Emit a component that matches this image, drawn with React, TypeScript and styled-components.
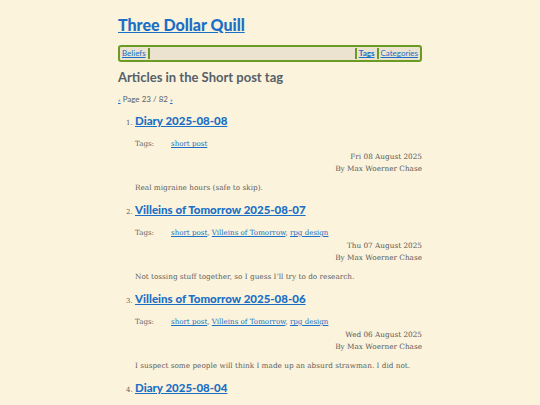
import * as React from 'react'
import styled, { createGlobalStyle } from 'styled-components'

const GlobalStyle = createGlobalStyle`
  body {
    margin: 0;
    background: #fbf3dc;
    color: #5a5a5a;
    font-family: "DejaVu Serif", serif;
  }
`

const linkColor = '#1a6fc6'
const green = '#6b9b22'
const headFont = 'Lato, "Open Sans", sans-serif'

const Page = styled.div`
  width: 304px;
  margin: 0 auto;
  padding-top: 13px;
`

const SiteTitle = styled.h1`
  margin: 0;
  font-family: ${headFont};
  font-size: 16px;
  line-height: 24px;
  font-weight: 900;

  a {
    color: ${linkColor};
  }
`

const Nav = styled.nav`
  margin-top: 8px;
  display: flex;
  align-items: stretch;
  border: 2px solid ${green};
  border-radius: 3px;
  background: #ebe3cf;
  height: 13px;
  font-family: ${headFont};
  font-size: 8px;
  line-height: 13px;
`

const NavItem = styled.a<{ $current?: boolean; $first?: boolean }>`
  padding: 0 2px;
  color: ${linkColor};
  font-weight: ${(p) => (p.$current ? 700 : 400)};
  border-left: ${(p) => (p.$first ? 'none' : `2px solid ${green}`)};
  margin: 1px 0;
  line-height: 11px;
`

const NavSpacer = styled.div`
  flex: 1;
  border-left: 2px solid ${green};
  margin: 1px 0;
`

const PageHeading = styled.h2`
  margin: 6px 0 0;
  font-family: ${headFont};
  font-size: 13px;
  line-height: 18px;
  font-weight: 700;
  color: #56606a;
`

const Pager = styled.p`
  margin: 8px 0 0;
  font-family: ${headFont};
  font-size: 8px;
  line-height: 10px;
  color: #5a6068;

  a {
    color: ${linkColor};
    font-size: 6px;
  }
`

const ArticleList = styled.ol`
  margin: 7px 0 0;
  padding-left: 17px;
`

const Article = styled.li`
  font-size: 7px;
  color: #666;
  padding-bottom: 7px;
`

const ArticleTitle = styled.h3`
  margin: 0;
  font-family: ${headFont};
  font-size: 11.5px;
  line-height: 18px;
  font-weight: 900;

  a {
    color: ${linkColor};
  }
`

const TagRow = styled.div`
  margin-top: 8px;
  display: flex;
  font-size: 7.1px;
  line-height: 12px;
  color: #666;
`

const TagLabel = styled.span`
  width: 36px;
`

const TagLink = styled.a`
  color: ${linkColor};
`

const Meta = styled.div`
  text-align: right;
  font-size: 7.3px;
  line-height: 12px;
  margin-top: 1px;
  color: #595959;
`

const Summary = styled.p`
  margin: 7px 0 0;
  font-size: 7.3px;
  line-height: 12px;
  color: #5f5f5f;
`

type Post = {
  title: string
  tags: string[]
  date: string
  summary: string
}

const posts: Post[] = [
  {
    title: 'Diary 2025-08-08',
    tags: ['short post'],
    date: 'Fri 08 August 2025',
    summary: 'Real migraine hours (safe to skip).',
  },
  {
    title: 'Villeins of Tomorrow 2025-08-07',
    tags: ['short post', 'Villeins of Tomorrow', 'rpg design'],
    date: 'Thu 07 August 2025',
    summary: 'Not tossing stuff together, so I guess I\u2019ll try to do research.',
  },
  {
    title: 'Villeins of Tomorrow 2025-08-06',
    tags: ['short post', 'Villeins of Tomorrow', 'rpg design'],
    date: 'Wed 06 August 2025',
    summary: 'I suspect some people will think I made up an absurd strawman. I did not.',
  },
  {
    title: 'Diary 2025-08-04',
    tags: ['short post'],
    date: 'Mon 04 August 2025',
    summary: '',
  },
]

export default function App() {
  return (
    <Page>
      <GlobalStyle />
      <SiteTitle>
        <a href="#">Three Dollar Quill</a>
      </SiteTitle>
      <Nav>
        <NavItem $first href="#">Beliefs</NavItem>
        <NavSpacer />
        <NavItem $current href="#">Tags</NavItem>
        <NavItem href="#">Categories</NavItem>
      </Nav>
      <PageHeading>Articles in the Short post tag</PageHeading>
      <Pager>
        <a href="#">«</a> Page 23 / 82 <a href="#">»</a>
      </Pager>
      <ArticleList>
        {posts.map((post) => (
          <Article key={post.title}>
            <ArticleTitle>
              <a href="#">{post.title}</a>
            </ArticleTitle>
            <TagRow>
              <TagLabel>Tags:</TagLabel>
              <span>
                {post.tags.map((tag, i) => (
                  <React.Fragment key={tag}>
                    {i > 0 && ', '}
                    <TagLink href="#">{tag}</TagLink>
                  </React.Fragment>
                ))}
              </span>
            </TagRow>
            <Meta>
              {post.date}
              <br />
              By Max Woerner Chase
            </Meta>
            {post.summary && <Summary>{post.summary}</Summary>}
          </Article>
        ))}
      </ArticleList>
    </Page>
  )
}
